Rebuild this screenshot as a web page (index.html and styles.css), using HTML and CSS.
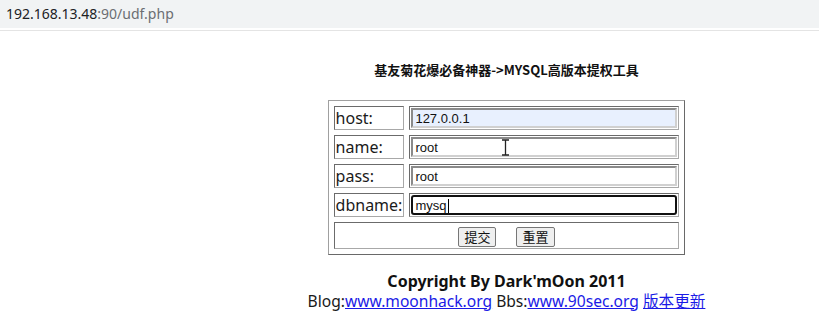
FILE: index.html
```html
<!DOCTYPE html>
<html>
<head>
<meta charset="utf-8">
<title>udf</title>
<link rel="stylesheet" href="styles.css">
</head>
<body>
<div class="urlbar"><span class="host">192.168.13.48</span><span class="rest">:90/udf.php</span></div>
<div class="urlsep"></div>
<div class="page">
  <div class="title">基友菊花爆必备神器-&gt;MYSQL高版本提权工具</div>
  <form class="form">
    <table class="grid">
      <tr>
        <td class="label">host:</td>
        <td class="field"><input class="inp autofill" type="text" value="127.0.0.1"></td>
      </tr>
      <tr>
        <td class="label">name:</td>
        <td class="field"><input class="inp" type="text" value="root"><span class="ibeam"><svg width="9" height="17" viewBox="0 0 9 17"><path d="M1 1h7M4.5 1v15M1 16h7" stroke="#222" stroke-width="1.3" fill="none"/></svg></span></td>
      </tr>
      <tr>
        <td class="label">pass:</td>
        <td class="field"><input class="inp" type="text" value="root"></td>
      </tr>
      <tr>
        <td class="label">dbname:</td>
        <td class="field"><input class="inp focused" type="text" value="mysq"><span class="caret"></span></td>
      </tr>
      <tr>
        <td class="buttons" colspan="2"><button type="button" class="btn">提交</button><button type="button" class="btn">重置</button></td>
      </tr>
    </table>
  </form>
  <div class="copy">Copyright By Dark'mOon 2011</div>
  <div class="links">Blog:<a href="#">www.moonhack.org</a> Bbs:<a href="#">www.90sec.org</a> <a href="#">版本更新</a></div>
</div>
</body>
</html>
```

FILE: styles.css
```css
html, body {
  margin: 0;
  padding: 0;
  background: #ffffff;
  color: #1a1a1a;
  font-family: "Noto Sans", "Noto Sans CJK SC", sans-serif;
}

.urlbar {
  height: 28px;
  background: #f1f3f4;
  padding-left: 6px;
  font-family: "Noto Sans", "Noto Sans CJK SC", sans-serif;
  font-size: 14px;
  line-height: 28px;
  white-space: nowrap;
}
.urlbar .host { color: #202124; }
.urlbar .rest { color: #6b6e72; }

.urlsep {
  height: 1px;
  margin-top: 2px;
  background: #e4e4e4;
}

.page {
  padding-left: 194px;
  text-align: center;
}

.title {
  margin-top: 31px;
  font-family: "Noto Sans CJK SC", sans-serif;
  font-weight: bold;
  font-size: 13px;
  line-height: 16px;
  color: #111;
}

.form {
  margin: 22px 0 0 0;
}

.grid {
  margin: 0 auto;
  border-collapse: separate;
  border-spacing: 5px;
  border-style: solid;
  border-width: 1px;
  border-color: #a0a0a0 #696969 #696969 #a0a0a0;
}

.grid td {
  border-style: solid;
  border-width: 1px;
  border-color: #6b6b6b #a8a8a8 #a8a8a8 #6b6b6b;
  padding: 1px;
}

.label {
  width: 65px;
  height: 20px;
  text-align: left;
  font-family: "Noto Sans", "Noto Sans CJK SC", sans-serif;
  font-size: 16px;
  line-height: 20px;
  color: #1a1a1a;
  white-space: nowrap;
}

.field {
  width: 266px;
  position: relative;
}

.inp {
  display: block;
  box-sizing: border-box;
  width: 100%;
  height: 20px;
  margin: 0;
  padding: 0 2px;
  border-style: solid;
  border-width: 2px;
  border-color: #8a8a8a #d0d0d0 #d0d0d0 #8a8a8a;
  background: #ffffff;
  font-family: "Liberation Sans", Arial, sans-serif;
  font-size: 13px;
  color: #111;
  outline: none;
}

.inp.autofill {
  background: #e8f0fe;
}

.inp.focused {
  border: 2px solid #111;
  border-radius: 3px;
}

.ibeam {
  position: absolute;
  left: 91px;
  top: 3px;
  line-height: 0;
}

.caret {
  position: absolute;
  left: 38px;
  top: 5px;
  width: 1px;
  height: 14px;
  background: #000;
}

.buttons {
  height: 22px;
  text-align: center;
  padding: 1px;
}

.btn {
  box-sizing: border-box;
  height: 20px;
  margin: 0 10px;
  padding: 0 5px;
  font-family: "Noto Sans CJK SC", sans-serif;
  font-size: 13px;
  line-height: 16px;
  color: #111;
  background: #efefef;
  border: 1px solid #767676;
  border-radius: 2px;
  vertical-align: middle;
}

.copy {
  margin-top: 16px;
  font-family: "Noto Sans", "Noto Sans CJK SC", sans-serif;
  font-weight: bold;
  font-size: 16px;
  line-height: 20px;
  color: #111;
}

.links {
  font-family: "Noto Sans", "Noto Sans CJK SC", sans-serif;
  font-size: 15.6px;
  line-height: 20px;
  color: #1a1a1a;
  white-space: nowrap;
}

.links a {
  color: #1a1ae6;
  text-decoration: underline;
}
```
